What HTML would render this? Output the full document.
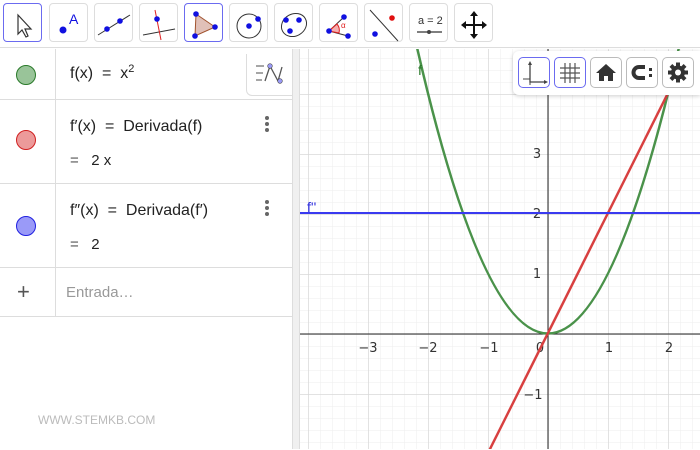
<!DOCTYPE html>
<html><head><meta charset="utf-8"><style>
*{margin:0;padding:0;box-sizing:border-box}
html,body{width:700px;height:450px;overflow:hidden}
body{background:#fff;font-family:"Liberation Sans","DejaVu Sans",sans-serif;position:relative;color:#222}
.tb{position:absolute;top:0;left:0;width:700px;height:48px;background:#fff;border-bottom:1px solid #ddd}
.btn{position:absolute;top:3px;width:39px;height:39px;border:1px solid #ddd;border-radius:4px;background:#fff}
.btn.sel{border:1.5px solid #6b6bf0}
.btn svg{position:absolute;left:0;top:0}
.row{position:absolute;left:0;width:292px;border-bottom:1px solid #ddd}
.vl{position:absolute;left:55px;top:49px;width:1px;height:268px;background:#ddd}
.dot{position:absolute;left:16px;width:20px;height:20px;border-radius:50%}
.tx{position:absolute;left:70px;font-size:16px;color:#222;white-space:nowrap;line-height:20px}
.kb{position:absolute;left:265px;width:4px}
.kb i{display:block;width:4px;height:4px;border-radius:2px;background:#666;margin-bottom:2px}
.div{position:absolute;left:292px;top:49px;width:8px;height:400px;background:#f0f0f0;border-left:1px solid #ddd;border-right:1px solid #ddd}
.sb{position:absolute;top:57px;width:32px;height:31px;border:1px solid #bbb;border-radius:5px;background:#fff}
.sb.sel{border-color:#6b6bf0}
</style></head><body>
<div class="tb">
<div class="btn sel" style="left:3px"><svg width="39" height="39"><path d="M14 11 L14 30 L18 26 L22 33 L24 32 L21 25 L27 25 Z" fill="#fff" stroke="#333" stroke-width="1.2"/></svg></div>
<div class="btn" style="left:49px"><svg width="39" height="39"><circle cx="13" cy="26" r="3.5" fill="#1010e0"/><text x="19" y="20" font-size="14" fill="#1010e0" font-family="Liberation Sans">A</text></svg></div>
<div class="btn" style="left:94px"><svg width="39" height="39"><line x1="3" y1="31" x2="35" y2="11" stroke="#333"/><circle cx="12" cy="25" r="2.8" fill="#1010e0"/><circle cx="25" cy="17" r="2.8" fill="#1010e0"/></svg></div>
<div class="btn" style="left:139px"><svg width="39" height="39"><line x1="3" y1="31" x2="35" y2="25" stroke="#333"/><line x1="15" y1="6" x2="21" y2="36" stroke="#e02020"/><circle cx="17" cy="15" r="2.8" fill="#1010e0"/></svg></div>
<div class="btn sel" style="left:184px"><svg width="39" height="39"><path d="M11 10 L30 23 L10 32 Z" fill="#e0c0b8" stroke="#a0522d" stroke-width="1"/><circle cx="11" cy="10" r="2.8" fill="#1010e0"/><circle cx="30" cy="23" r="2.8" fill="#1010e0"/><circle cx="10" cy="32" r="2.8" fill="#1010e0"/></svg></div>
<div class="btn" style="left:229px"><svg width="39" height="39"><circle cx="19" cy="22" r="12" fill="none" stroke="#333"/><circle cx="19" cy="22" r="2.8" fill="#1010e0"/><circle cx="28" cy="15" r="2.8" fill="#1010e0"/></svg></div>
<div class="btn" style="left:274px"><svg width="39" height="39"><ellipse cx="19" cy="21" rx="13" ry="11" transform="rotate(-30 19 21)" fill="none" stroke="#333"/><circle cx="11" cy="16" r="2.8" fill="#1010e0"/><circle cx="24" cy="16" r="2.8" fill="#1010e0"/><circle cx="15" cy="27" r="2.8" fill="#1010e0"/></svg></div>
<div class="btn" style="left:319px"><svg width="39" height="39"><path d="M9 27 L24 13 M9 27 L28 32" stroke="#333"/><path d="M9 27 L17 20 A10 10 0 0 1 19 29 Z" fill="#f4b0b0" stroke="#e02020"/><text x="21" y="24" font-size="8" fill="#e02020">α</text><circle cx="24" cy="13" r="2.8" fill="#1010e0"/><circle cx="9" cy="27" r="2.8" fill="#1010e0"/><circle cx="28" cy="32" r="2.8" fill="#1010e0"/></svg></div>
<div class="btn" style="left:364px"><svg width="39" height="39"><line x1="5" y1="6" x2="33" y2="37" stroke="#333"/><circle cx="27" cy="14" r="2.8" fill="#e01010"/><circle cx="10" cy="30" r="2.8" fill="#1010e0"/></svg></div>
<div class="btn" style="left:409px"><svg width="39" height="39"><text x="8" y="20" font-size="11" fill="#333" font-family="Liberation Sans">a = 2</text><line x1="7" y1="28" x2="32" y2="28" stroke="#555" stroke-width="1.5"/><circle cx="19" cy="28" r="2" fill="#444"/></svg></div>
<div class="btn" style="left:454px"><svg width="39" height="39"><path d="M19 9 V33 M8 21 H30" stroke="#111" stroke-width="2"/><path d="M19 7 L15 12 H23Z M19 35 L15 30 H23Z M6 21 L11 17 V25Z M32 21 L27 17 V25Z" fill="#111"/></svg></div>
</div>

<div class="row" style="top:49px;height:51px"><div class="dot" style="top:16px;background:#99c499;border:1px solid #2a7a2a"></div><div class="tx" style="top:15px">f(x) &nbsp;= &nbsp;x<span style="font-size:11px;position:relative;top:-6px">2</span></div></div>
<div class="row" style="top:100px;height:84px"><div class="dot" style="top:30px;background:#ec9a9a;border:1px solid #d02020"></div><div class="tx" style="top:17px">f′(x) &nbsp;= &nbsp;Derivada(f)</div><div class="tx" style="top:51px;font-size:15px"><span style="color:#555">=</span> &nbsp; 2 x</div><div class="kb" style="top:16px"><i></i><i></i><i></i></div></div>
<div class="row" style="top:184px;height:84px"><div class="dot" style="top:32px;background:#9a9af8;border:1px solid #2020e0"></div><div class="tx" style="top:17px">f″(x) &nbsp;= &nbsp;Derivada(f′)</div><div class="tx" style="top:51px;font-size:15px"><span style="color:#555">=</span> &nbsp; 2</div><div class="kb" style="top:16px"><i></i><i></i><i></i></div></div>
<div class="row" style="top:268px;height:49px"><div style="position:absolute;left:17px;top:12px;font-size:22px;line-height:24px;color:#555">+</div><div class="tx" style="left:66px;top:15px;font-size:15px;color:#999">Entrada…</div></div>
<div class="vl"></div>
<div style="position:absolute;left:246px;top:54px;width:46px;height:42px;background:#fff;border:1px solid #ddd;border-right:none;border-top:none;border-radius:0 0 0 6px"><svg width="46" height="42"><path d="M9 12 H17 M9 19 H16 M9 26 H15" stroke="#888" stroke-width="1.5"/><path d="M18 27 L23 12 L31 27 L35 13" stroke="#555" fill="none" stroke-width="1.3"/><circle cx="23" cy="12" r="2.3" fill="#9a9af8" stroke="#444" stroke-width=".6"/><circle cx="33" cy="27" r="2.3" fill="#9a9af8" stroke="#444" stroke-width=".6"/></svg></div>
<div style="position:absolute;left:38px;top:413px;font-size:12px;line-height:14px;color:#bbb">WWW.STEMKB.COM</div>
<div class="div"></div>

<svg style="position:absolute;left:300px;top:49px;display:block" width="400" height="400">
<defs>
<pattern id="mi" x="8" y="9" width="12" height="12" patternUnits="userSpaceOnUse"><path d="M0 0 H12 M0 0 V12" stroke="#eeeeee" stroke-width="1"/></pattern>
<pattern id="ma" x="8" y="45" width="60" height="60" patternUnits="userSpaceOnUse"><path d="M0 0 H60 M0 0 V60" stroke="#d8d8d8" stroke-width="1.5"/></pattern>
</defs>
<rect width="400" height="400" fill="url(#mi)"/>
<rect width="400" height="400" fill="url(#ma)"/>
<line x1="0" y1="285" x2="400" y2="285" stroke="#222" stroke-width="1"/>
<line x1="248" y1="0" x2="248" y2="400" stroke="#222" stroke-width="1"/>
<g font-size="13" fill="#333" font-family="DejaVu Sans,Liberation Sans" text-anchor="middle">
<text x="68" y="303">−3</text><text x="128" y="303">−2</text><text x="189" y="303">−1</text><text x="240" y="303">0</text><text x="309" y="303">1</text><text x="369" y="303">2</text>
<text x="237" y="109">3</text><text x="237" y="229">1</text><text x="233" y="350">−1</text><text x="237" y="169">2</text>
</g>
<path d="M116 -6 Q248 575 380 -6" fill="none" stroke="#4a924a" stroke-width="2.5"/>
<line x1="157" y1="466" x2="380" y2="20" stroke="#d84040" stroke-width="2.5"/>
<line x1="0" y1="164" x2="400" y2="164" stroke="#3a3af0" stroke-width="2"/>
<text x="118" y="26" font-size="14" fill="#2a7a2a">f</text>
<text x="7" y="163" font-size="14" fill="#2a2ae0">f''</text>
</svg>

<div style="position:absolute;left:513px;top:51px;width:187px;height:44px;background:#fff;border-radius:6px 0 0 6px;box-shadow:0 1px 4px rgba(0,0,0,.2)"></div>
<div class="sb sel" style="left:518px"><svg width="30" height="29"><path d="M11 5 V24 H27" stroke="#444" fill="none" stroke-width="1.3"/><path d="M4 21 H11 M11 24 V27" stroke="#444"/><path d="M9 7 L11 3 L13 7Z M25 22 L29 24 L25 26Z" fill="#444"/></svg></div>
<div class="sb sel" style="left:554px"><svg width="30" height="29"><path d="M5 10 H25 M5 15 H25 M5 20 H25 M10 5 V25 M15 5 V25 M20 5 V25" stroke="#555" stroke-width="1.2"/></svg></div>
<div class="sb" style="left:590px"><svg width="30" height="29"><path d="M15 6 L5 15 H8 V23 H13 V18 H17 V23 H22 V15 H25 Z" fill="#333"/></svg></div>
<div class="sb" style="left:626px"><svg width="30" height="29"><path d="M18 9 H12 A5.5 5.5 0 0 0 12 20 H18" fill="none" stroke="#333" stroke-width="4"/><rect x="22" y="10" width="3" height="3" fill="#333"/><rect x="22" y="16" width="3" height="3" fill="#333"/></svg></div>
<div class="sb" style="left:662px"><svg width="30" height="29"><g transform="translate(15 14.5)"><circle r="7" fill="#333"/><g fill="#333"><rect x="-2" y="-10" width="4" height="20"/><rect x="-2" y="-10" width="4" height="20" transform="rotate(45)"/><rect x="-2" y="-10" width="4" height="20" transform="rotate(90)"/><rect x="-2" y="-10" width="4" height="20" transform="rotate(135)"/></g><circle r="3" fill="#fff"/></g></svg></div>
</body></html>
